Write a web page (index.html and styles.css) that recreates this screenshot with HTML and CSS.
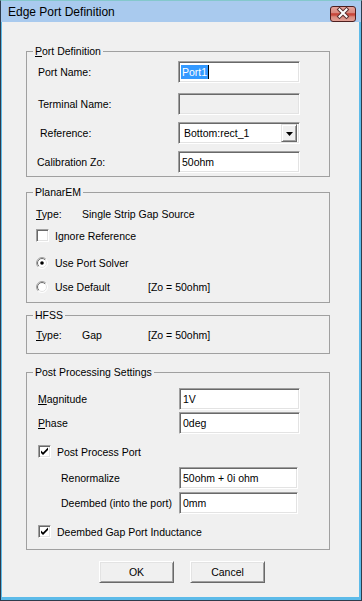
FILE: index.html
```html
<!DOCTYPE html>
<html lang="en">
<head>
  <meta charset="UTF-8" />
  <title>Edge Port Definition</title>
  <link rel="stylesheet" href="styles.css">
</head>
<body>
  <div class="window">
    <div class="titlebar">
      <span class="title">Edge Port Definition</span>
      <button class="close" aria-label="Close">
        <svg width="24" height="15" viewBox="0 0 24 15">
          <path d="M8.5 3.5 L15.5 10.5 M15.5 3.5 L8.5 10.5" stroke="#5a3030" stroke-width="4" stroke-linecap="square" />
          <path d="M8.5 3.5 L15.5 10.5 M15.5 3.5 L8.5 10.5" stroke="#fff" stroke-width="2" stroke-linecap="square" />
        </svg>
      </button>
    </div>

    <div class="client">
      <fieldset class="group group-port">
        <legend><u>P</u>ort Definition</legend>
        <div class="row field-row gap-3">
          <span class="label">Port Name:</span>
          <div class="edit"><span class="sel">Port1</span><span class="caret"></span></div>
        </div>
        <div class="row field-row gap-10">
          <span class="label">Terminal Name:</span>
          <div class="edit disabled"></div>
        </div>
        <div class="row field-row gap-7">
          <span class="label label-ref">Reference:</span>
          <div class="edit combo">
            <span class="combo-text">Bottom:rect_1</span>
            <span class="drop">
              <svg width="7" height="4" viewBox="0 0 7 4"><path d="M0 0 H7 L3.5 4 Z" fill="#000" /></svg>
            </span>
          </div>
        </div>
        <div class="row field-row gap-7">
          <span class="label label-cal">Calibration Zo:</span>
          <div class="edit">50ohm</div>
        </div>
      </fieldset>

      <fieldset class="group group-planar">
        <legend>PlanarEM</legend>
        <div class="row info-row gap-8">
          <span class="info-key"><u>T</u>ype:</span>
          <span class="info-val">Single Strip Gap Source</span>
        </div>
        <div class="row check-row gap-8">
          <span class="box"></span>
          <span class="check-label">Ignore Reference</span>
        </div>
        <div class="row check-row gap-14">
          <svg class="radio" width="12" height="12" viewBox="0 0 12 12">
            <defs>
              <linearGradient id="rOut" x1="0" y1="0" x2="1" y2="1">
                <stop offset="0.45" stop-color="#a0a0a0" /><stop offset="0.55" stop-color="#ffffff" />
              </linearGradient>
              <linearGradient id="rIn" x1="0" y1="0" x2="1" y2="1">
                <stop offset="0.45" stop-color="#696969" /><stop offset="0.55" stop-color="#e3e3e3" />
              </linearGradient>
            </defs>
            <circle cx="6" cy="6" r="5.5" fill="#fff" stroke="url(#rOut)" />
            <circle cx="6" cy="6" r="4.5" fill="#fff" stroke="url(#rIn)" />
            <circle cx="6" cy="6" r="1.8" fill="#000" />
          </svg>
          <span class="check-label radio-label">Use Port Solver</span>
        </div>
        <div class="row check-row gap-11">
          <svg class="radio" width="12" height="12" viewBox="0 0 12 12">
            <circle cx="6" cy="6" r="5.5" fill="#fff" stroke="url(#rOut)" />
            <circle cx="6" cy="6" r="4.5" fill="#fff" stroke="url(#rIn)" />
          </svg>
          <span class="check-label radio-label default-label">Use Default</span>
          <span>[Zo = 50ohm]</span>
        </div>
      </fieldset>

      <fieldset class="group group-hfss">
        <legend>HFSS</legend>
        <div class="row info-row gap-6">
          <span class="info-key"><u>T</u>ype:</span>
          <span class="info-val">Gap</span>
          <span>[Zo = 50ohm]</span>
        </div>
      </fieldset>

      <fieldset class="group group-post">
        <legend>Post Processing Settings</legend>
        <div class="row field-row gap-9">
          <span class="label label-post"><u>M</u>agnitude</span>
          <div class="edit edit-post">1V</div>
        </div>
        <div class="row field-row gap-2">
          <span class="label label-post"><u>P</u>hase</span>
          <div class="edit edit-post">0deg</div>
        </div>
        <div class="row check-row gap-11 indent">
          <span class="box checked">
            <svg width="9" height="9" viewBox="0 0 9 9"><polygon points="1,3.5 1,6 3,8 8,3 8,0.5 3,5.5" fill="#000" /></svg>
          </span>
          <span class="check-label">Post Process Port</span>
        </div>
        <div class="row field-row gap-9">
          <span class="label label-sub">Renormalize</span>
          <div class="edit edit-sub">50ohm + 0i ohm</div>
        </div>
        <div class="row field-row gap-3">
          <span class="label label-sub">Deembed (into the port)</span>
          <div class="edit edit-sub">0mm</div>
        </div>
        <div class="row check-row gap-11 indent">
          <span class="box checked">
            <svg width="9" height="9" viewBox="0 0 9 9"><polygon points="1,3.5 1,6 3,8 8,3 8,0.5 3,5.5" fill="#000" /></svg>
          </span>
          <span class="check-label">Deembed Gap Port Inductance</span>
        </div>
      </fieldset>

      <div class="buttons">
        <button class="btn">OK</button>
        <button class="btn">Cancel</button>
      </div>
    </div>
  </div>
</body>
</html>
```

FILE: styles.css
```css
* {
  box-sizing: border-box;
}

body {
  margin: 0;
  background: #f0f0f0;
  font-family: "Liberation Sans", Arial, sans-serif;
  font-size: 10.5px;
  color: #000;
}

/* window frame */
.window {
  width: 362px;
  height: 601px;
  border: 1px solid #2e3c4c;
  border-top-color: #84c8cc;
  background: #5dbbe9;
}

.titlebar {
  height: 21px;
  background: #a9caee;
  display: flex;
  align-items: center;
  justify-content: space-between;
  padding: 0 5px 0 7px;
}

.title {
  font-size: 12px;
  padding-top: 1px;
}

.close {
  width: 26px;
  height: 16px;
  margin-top: 4px;
  padding: 0;
  border: 1px solid #4d1f1f;
  border-radius: 3px;
  background: linear-gradient(#e6a59c 0%, #d98a80 40%, #c6453a 48%, #c94a3d 58%, #d88a7e 70%, #e3a096 100%);
  display: flex;
  align-items: center;
  justify-content: center;
}

.client {
  height: 575px;
  margin: 0 2px 0 1px;
  background: #f0f0f0;
  padding: 23px 0 0 24px;
}

/* group boxes */
.group {
  width: 304px;
  margin: 0;
  padding: 0 0 0 6px;
  border: 1px solid #a0a0a0;
}

legend {
  padding: 0 2px;
  line-height: 13px;
}

.group-port { padding-bottom: 3px; }
.group-planar { margin-top: 9px; padding-bottom: 9px; }
.group-hfss { margin-top: 6px; padding-bottom: 11px; }
.group-post { margin-top: 12px; padding-bottom: 11px; }

.row {
  display: flex;
  align-items: center;
  white-space: nowrap;
}

.row > * {
  flex-shrink: 0;
}

.gap-2 { margin-top: 2px; }
.gap-3 { margin-top: 3px; }
.gap-6 { margin-top: 6px; }
.gap-7 { margin-top: 7px; }
.gap-8 { margin-top: 8px; }
.gap-9 { margin-top: 9px; }
.gap-10 { margin-top: 10px; }
.gap-11 { margin-top: 11px; }
.gap-14 { margin-top: 14px; }

.field-row {
  height: 22px;
}

.label {
  width: 140px;
  margin-left: 5px;
}

.label-ref { margin-left: 7px; width: 138px; }
.label-cal { margin-left: 4px; width: 141px; }
.label-post { width: 141px; }
.label-sub { margin-left: 28px; width: 118px; }

/* sunken edit boxes */
.edit {
  width: 122px;
  height: 22px;
  background: #fff;
  border: 1px solid;
  border-color: #a0a0a0 #fff #fff #a0a0a0;
  box-shadow: inset 1px 1px 0 #696969, inset -1px -1px 0 #e3e3e3;
  padding: 0 0 0 3px;
  display: flex;
  align-items: center;
  white-space: nowrap;
}

.edit-post { width: 121px; }
.edit-sub { width: 119px; }

.edit.disabled {
  background: #f0f0f0;
}

.sel {
  background: #3399ff;
  color: #fff;
  line-height: 14px;
  padding: 0 1px;
  margin-left: -1px;
}

.caret {
  width: 1px;
  height: 14px;
  background: #000;
}

.combo {
  padding: 2px 2px 2px 5px;
  justify-content: space-between;
}

.drop {
  width: 16px;
  height: 18px;
  background: #f0f0f0;
  border: 1px solid;
  border-color: #e3e3e3 #696969 #696969 #e3e3e3;
  box-shadow: inset 1px 1px 0 #fff, inset -1px -1px 0 #a0a0a0;
  display: flex;
  align-items: center;
  justify-content: center;
  padding-top: 1px;
}

/* static info rows */
.info-row {
  height: 14px;
  margin-left: 3px;
}

.info-key { width: 46px; }
.info-val { width: 66px; }

/* check boxes and radios */
.check-row {
  height: 13px;
  margin-left: 3px;
}

.check-row.indent {
  margin-left: 5px;
}

.box {
  width: 13px;
  height: 13px;
  background: #fff;
  border: 1px solid;
  border-color: #a0a0a0 #fff #fff #a0a0a0;
  box-shadow: inset 1px 1px 0 #696969, inset -1px -1px 0 #e3e3e3;
  display: flex;
  align-items: center;
  justify-content: center;
}

.check-label {
  margin-left: 6px;
}

.radio-label {
  margin-left: 7px;
}

.default-label {
  width: 93px;
}

/* dialog buttons */
.buttons {
  display: flex;
  gap: 16px;
  margin-top: 11px;
  padding-left: 73px;
}

.btn {
  width: 75px;
  height: 22px;
  font-family: inherit;
  font-size: 10.5px;
  background: #f0f0f0;
  border: 1px solid;
  border-color: #fff #696969 #696969 #fff;
  box-shadow: inset 1px 1px 0 #e3e3e3, inset -1px -1px 0 #a0a0a0;
  padding: 0;
}
```
